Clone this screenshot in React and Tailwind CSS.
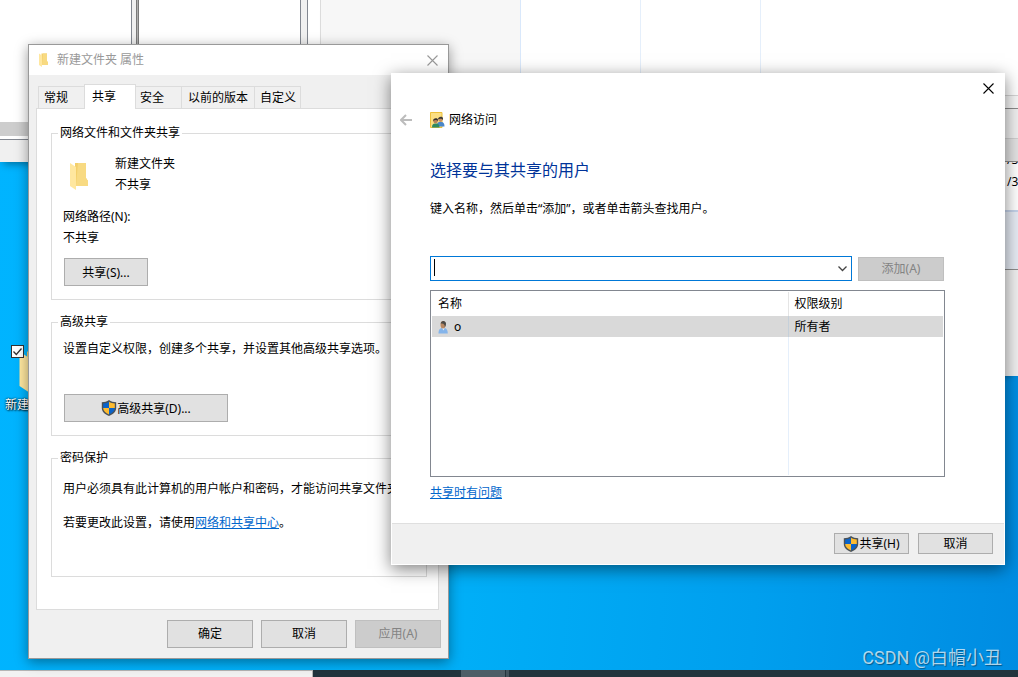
import React, { useState } from 'react'

function FolderIcon({ className }) {
  return (
    <svg className={className} viewBox="0 0 20 28" aria-hidden="true">
      <path d="M1 1h16v15l2 3v5H6V1z" fill="#f3cf6b" />
      <path d="M9 1h8v15l2 3v5H7z" fill="#f8da82" />
      <path d="M1 1l6 4v23l-6-4z" fill="#ffe79f" />
    </svg>
  )
}

function ShieldIcon() {
  return (
    <svg className="h-4 w-4 shrink-0" viewBox="0 0 16 16" aria-hidden="true">
      <path d="M8 0C6 1.700 3.500 2.200 0.800 2.200V8c0 3.700 3 6.300 7.200 8 4.200-1.700 7.200-4.300 7.200-8V2.200C12.500 2.200 10 1.700 8 0z" fill="#4b5258" />
      <path d="M7.900 1.700C6.300 2.800 4.300 3.300 2.200 3.400v4.500h5.700z" fill="#0a63c9" />
      <path d="M8 1.700c1.600 1.100 3.700 1.600 5.800 1.700v4.500H8z" fill="#fdbb30" />
      <path d="M2.200 7.900c0 2.800 2.300 5.100 5.800 6.700V7.900z" fill="#fdbb30" />
      <path d="M13.800 7.900c0 2.800-2.300 5.100-5.800 6.700V7.900z" fill="#0a63c9" />
    </svg>
  )
}

function SharedUsersIcon() {
  return (
    <svg className="h-4 w-4 shrink-0" viewBox="0 0 16 16" aria-hidden="true">
      <path d="M0.500 0.500h11.500v15h-11.500z" fill="#fbdf83" stroke="#ecc03c" />
      <path d="M7 14.500c0-3.500.5-4.500 3-4.500h1.500c2 0 3 1.500 3 4.500z" fill="#4a86c9" />
      <circle cx="10.500" cy="7.800" r="2.100" fill="#c58f63" />
      <path d="M8 7.500c0-3.300 4.300-3.500 5-1.300v2c-1-1.500-3-1.800-5-.7z" fill="#3d3a38" />
      <path d="M2 15.500c0-3 1-4 3-4h1.500c2 0 3 1.300 3 4z" fill="#2f8a63" />
      <circle cx="5.500" cy="9.200" r="2.100" fill="#b98258" />
      <path d="M3 9c0-3.300 4.300-3.500 5-1.300v1.500c-1-1.500-3-1.500-5-.2z" fill="#35302e" />
    </svg>
  )
}

function UserIcon() {
  return (
    <svg className="h-[14px] w-[10px] shrink-0" viewBox="0 0 10 14" aria-hidden="true">
      <path d="M0.500 13.500c0-4 1.500-5.500 4-5.500h1.500c2.500 0 3.800 2 3.800 5.500z" fill="#84b4ea" />
      <path d="M4 8l1.500 2.500L6.500 8z" fill="#e8f0fa" />
      <ellipse cx="5" cy="4.700" rx="2.500" ry="3.700" fill="#b98862" />
      <path d="M2.700 3.500C3 0 7.800 0 8 3.500c0 1.500-.4 3-1.200 3.700C7 5 6 3 2.700 3.500z" fill="#4c4a46" />
    </svg>
  )
}

function CloseIcon() {
  return (
    <svg className="h-[11px] w-[11px]" viewBox="0 0 11 11" fill="none" stroke="currentColor" strokeWidth="1.100" aria-hidden="true">
      <path d="M0.500 0.500l10 10M10.500 0.500l-10 10" />
    </svg>
  )
}

function Button({ className, children, disabled }) {
  return (
    <button
      type="button"
      disabled={disabled}
      className={`flex items-center justify-center border ${disabled ? 'border-[#bfbfbf] bg-[#cccccc] text-[#838383]' : 'border-[#adadad] bg-[#e1e1e1]'} ${className}`}
    >
      {children}
    </button>
  )
}

function Group({ title, className, children }) {
  return (
    <fieldset className={`border border-[#dcdcdc] pl-[11px] ${className}`}>
      <legend className="-ml-[5px] px-[2px] leading-5">{title}</legend>
      {children}
    </fieldset>
  )
}

// windows that are open behind the dialogs
function BackWindows() {
  return (
    <>
      <div className="absolute left-0 top-0 flex w-[320px] flex-col shadow-[0_6px_8px_-4px_rgba(0,0,0,0.4)]">
        <div className="flex h-[122px] bg-white">
          <div className="w-[131px]" />
          <div className="w-[5px] border-l border-[#828790] bg-[#f0f0f0]" />
          <div className="w-[3px] border-x border-[#7a7a7a] bg-[#b0b0b0]" />
          <div className="w-[161px]" />
          <div className="w-2 border-x border-[#828790] bg-[#f0f0f0]" />
        </div>
        <div className="h-[14px] bg-[#cdcdcd]" />
        <div className="h-[3px] bg-white" />
        <div className="h-[23px] border-t border-[#828790] bg-[#f0f0f0]" />
      </div>

      <div className="absolute left-[320px] right-0 top-0 flex flex-col bg-[#f0f0f0] shadow-[0_6px_6px_-6px_rgba(0,0,0,0.4)]">
        <div className="flex h-[95px] bg-white">
          <div className="w-[201px] border-x border-l-[#dcdcdc] border-r-[#d9e8fb] bg-[#f7f7f7]" />
          <div className="w-[120px] border-r border-[#e5effb]" />
          <div className="w-[120px] border-r border-[#e5effb]" />
        </div>
        <div className="h-[13px] border-t border-[#d5d5d5] bg-[#f7f7f7]" />
        <div className="h-[30px] border-t border-[#8a8a8a]" />
        <div className="h-6 border-y border-[#d0d0d0] border-b-[#8c8c8c] bg-[#e3e3e3]" />
        <div className="h-12 overflow-hidden bg-white pl-[687px] leading-[22px]">
          <p className="-mt-[13px]">/3</p>
          <p>/3</p>
        </div>
        <div className="h-[60px] border-b border-t-2 border-b-[#8c8c8c] border-t-[#c5d3ea] bg-[#e6ebf4]" />
        <div className="h-[106px]" />
      </div>
    </>
  )
}

function PropertiesWindow() {
  const [active, setActive] = useState('share')
  const tabs = [
    { id: 'general', name: '常规', size: 'w-[47px] pl-[5px]' },
    { id: 'share', name: '共享', size: 'w-[52px] pl-[7px]' },
    { id: 'security', name: '安全', size: 'w-[47px] pl-1' },
    { id: 'versions', name: '以前的版本', size: 'w-[74px] pl-[6px]' },
    { id: 'custom', name: '自定义', size: 'w-[47px] pl-[5px]' },
  ]

  return (
    <section className="absolute left-7 top-[44px] w-[421px] border border-[#999999] bg-[#f0f0f0] shadow-[0_3px_12px_rgba(0,0,0,0.4)]">
      <header className="flex h-[30px] items-center bg-white pl-[9px] pr-[10px] text-[#999999]">
        <FolderIcon className="h-[14px] w-[11px]" />
        <h2 className="ml-2 flex-1">新建文件夹 属性</h2>
        <button type="button" aria-label="关闭"><CloseIcon /></button>
      </header>

      <div className="px-[7px] pt-2">
        <div className="flex h-[25px] items-end pl-[2px]">
          {tabs.map((tab) => (
            <button
              key={tab.id}
              type="button"
              onClick={() => setActive(tab.id)}
              className={`-mr-px whitespace-nowrap border border-b-0 border-[#dcdcdc] text-left ${active === tab.id ? 'relative -mb-px h-[25px] bg-white pb-px' : 'h-[22px]'} ${tab.size}`}
            >
              {tab.name}
            </button>
          ))}
        </div>

        <div className="flex w-[403px] flex-col gap-3 border border-[#dcdcdc] bg-white pb-8 pl-[14px] pr-[11px] pt-[14px]">
          <Group title="网络文件和文件夹共享" className="pb-[13px] pt-[10px] leading-[21px]">
            <div className="flex">
              <div className="w-[52px] pl-[6px] pt-[9px]">
                <FolderIcon className="h-7 w-5" />
              </div>
              <div>
                <p>新建文件夹</p>
                <p>不共享</p>
              </div>
            </div>
            <p className="mt-[11px]">网络路径(N):</p>
            <p>不共享</p>
            <Button className="ml-px mt-[10px] h-7 w-[84px]">共享(S)...</Button>
          </Group>

          <Group title="高级共享" className="pb-[13px] pt-[6px] leading-[21px]">
            <p className="whitespace-nowrap">设置自定义权限，创建多个共享，并设置其他高级共享选项。</p>
            <Button className="ml-px mt-[35px] h-7 w-[164px]">
              <ShieldIcon />
              高级共享(D)...
            </Button>
          </Group>

          <Group title="密码保护" className="pb-[43px] pt-[10px] leading-[21px]">
            <p className="whitespace-nowrap">用户必须具有此计算机的用户帐户和密码，才能访问共享文件夹。</p>
            <p className="mt-[13px]">
              若要更改此设置，请使用<a href="#" className="text-[#0066cc] underline">网络和共享中心</a>。
            </p>
          </Group>
        </div>
      </div>

      <footer className="flex justify-end gap-2 px-[7px] py-[10px]">
        <Button className="h-7 w-[86px]">确定</Button>
        <Button className="h-7 w-[86px]">取消</Button>
        <Button className="h-7 w-[86px]" disabled>应用(A)</Button>
      </footer>
    </section>
  )
}

function NetworkAccessWindow() {
  const [name, setName] = useState('')

  return (
    <section className="absolute left-[391px] top-[73px] w-[614px] border border-white bg-white shadow-[0_4px_16px_rgba(0,0,0,0.5)]">
      <div className="flex h-7 items-center justify-end pr-[10px]">
        <button type="button" aria-label="关闭"><CloseIcon /></button>
      </div>

      <div className="flex h-9 items-center pl-2">
        <button type="button" aria-label="后退" className="w-[30px] text-[#bcbcbc]">
          <svg className="h-3 w-3" viewBox="0 0 12 12" fill="none" stroke="currentColor" strokeWidth="2" aria-hidden="true">
            <path d="M12 6H1.500M6 1L1 6l5 5" />
          </svg>
        </button>
        <SharedUsersIcon />
        <span className="ml-[3px]">网络访问</span>
      </div>

      <div className="pl-[38px] pr-[59px]">
        <h1 className="mt-5 text-base leading-6 text-[#003399]">选择要与其共享的用户</h1>
        <p className="mt-4 leading-[21px]">键入名称，然后单击“添加”，或者单击箭头查找用户。</p>

        <div className="mt-[37px] flex items-end gap-[6px] pr-px">
          <div className="relative flex h-[25px] flex-1 border border-[#0078d7]">
            <input
              type="text"
              aria-label="用户名称"
              value={name}
              onChange={(e) => setName(e.target.value)}
              className="min-w-0 flex-1 px-1 outline-none"
            />
            <span className="absolute left-[3px] top-[2px] h-[17px] w-px bg-black" />
            <button type="button" aria-label="展开" className="flex w-[17px] items-center justify-center">
              <svg className="h-[6px] w-[9px]" viewBox="0 0 9 6" fill="none" stroke="#444444" strokeWidth="1.300" aria-hidden="true">
                <path d="M0.500 0.500l4 4 4-4" />
              </svg>
            </button>
          </div>
          <Button className="h-6 w-[86px]" disabled>添加(A)</Button>
        </div>

        <div className="mt-[9px] h-[187px] border border-[#828790] p-px">
          <table className="h-full w-full table-fixed border-collapse text-left">
            <thead>
              <tr className="h-6">
                <th className="w-[356px] border-r border-[#e5e5e5] p-0 pl-[6px] font-normal">名称</th>
                <th className="p-0 pl-[6px] font-normal">权限级别</th>
              </tr>
            </thead>
            <tbody>
              <tr className="h-[21px] bg-[#d9d9d9]">
                <td className="border-r border-[#c5d0da] p-0 pl-[6px]">
                  <span className="flex items-center gap-[6px]">
                    <UserIcon />
                    o
                  </span>
                </td>
                <td className="p-0 pl-[6px]">所有者</td>
              </tr>
              <tr>
                <td className="border-r border-[#e5effb] p-0" />
                <td className="p-0" />
              </tr>
            </tbody>
          </table>
        </div>

        <p className="mt-[5px] leading-[21px]">
          <a href="#" className="text-[#0066cc] underline">共享时有问题</a>
        </p>
      </div>

      <footer className="mt-5 flex h-[41px] justify-end gap-[9px] border-t border-[#dfdfdf] bg-[#f0f0f0] pr-[11px] pt-[9px]">
        <Button className="h-[21px] w-[75px]">
          <ShieldIcon />
          共享(H)
        </Button>
        <Button className="h-[21px] w-[75px]">取消</Button>
      </footer>
    </section>
  )
}

function App() {
  const [checked, setChecked] = useState(true)

  return (
    <main className="relative flex min-h-screen flex-col justify-end overflow-hidden bg-[linear-gradient(95deg,#00b4ff_0%,#00b0f8_45%,#009fee_75%,#008ce2_100%)] font-['Noto_Sans','Noto_Sans_CJK_SC',sans-serif] text-xs leading-[18px] text-black">
      <BackWindows />

      {/* desktop folder */}
      <div className="absolute left-[5px] top-[345px] w-[62px] text-white">
        <FolderIcon className="ml-[13px] mt-[5px] h-[42px] w-[30px]" />
        <label htmlFor="desktop-folder" className="mt-1 block whitespace-nowrap [text-shadow:1px_1px_2px_#000,0_0_2px_#000]">新建文件夹</label>
        <input
          id="desktop-folder"
          type="checkbox"
          checked={checked}
          onChange={(e) => setChecked(e.target.checked)}
          className="absolute left-[6px] top-0 h-[13px] w-[13px] appearance-none border border-[#333333] bg-white"
        />
        {checked && (
          <svg className="pointer-events-none absolute left-[6px] top-0 h-[13px] w-[13px]" viewBox="0 0 13 13" fill="none" stroke="#333333" strokeWidth="1.300" aria-hidden="true">
            <path d="M2.500 6.500l2.800 3 5.200-6" />
          </svg>
        )}
      </div>

      <PropertiesWindow />
      <NetworkAccessWindow />

      <p className="mr-4 self-end font-[Roboto,'Noto_Sans_CJK_SC',sans-serif] text-lg leading-6 text-white/70 [text-shadow:1px_1px_1px_rgba(0,0,0,0.4)]">CSDN @白帽小丑</p>

      {/* taskbar */}
      <div className="flex h-[7px] bg-[#22343d]">
        <div className="w-[313px] border-r border-t border-[#b5b5b5] bg-[#f2f2f2]" />
        <div className="ml-[148px] w-11 bg-[#4d5e67]" />
        <div className="ml-px w-[3px] bg-[#43545d]" />
      </div>
    </main>
  )
}

export default App
